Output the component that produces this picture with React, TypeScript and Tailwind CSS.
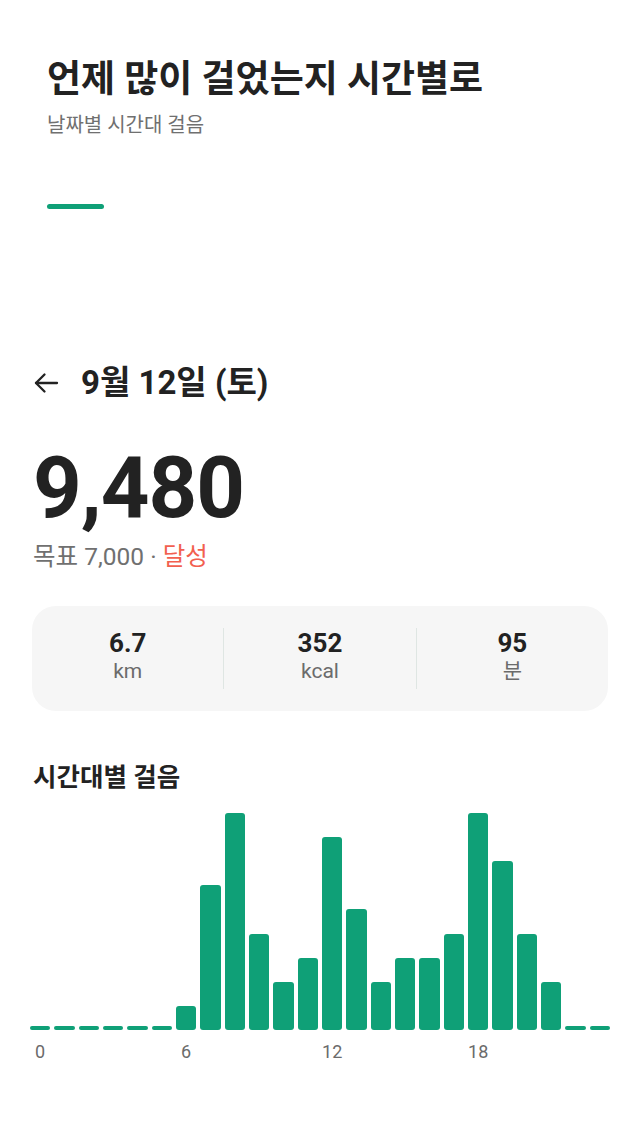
import React from "react";

const HOURS = [0, 0, 0, 0, 0, 0, 1, 6, 9, 4, 2, 3, 8, 5, 2, 3, 3, 4, 9, 7, 4, 2, 0, 0];
const UNIT = 24.1;

function BackArrow() {
  return (
    <svg width="26" height="22" viewBox="0 0 26 22" fill="none" className="shrink-0">
      <path d="M24 11H3" stroke="#222222" strokeWidth="2.3" strokeLinecap="round" />
      <path d="M11.5 2.5L3 11l8.5 8.5" stroke="#222222" strokeWidth="2.3" strokeLinecap="round" strokeLinejoin="round" />
    </svg>
  );
}

export default function App() {
  const font = { fontFamily: "Roboto, 'Noto Sans CJK KR', 'Noto Sans', sans-serif" };
  return (
    <div className="w-[640px] h-[1138px] bg-white text-[#222222] overflow-hidden" style={font}>
      <div className="px-[47px] pt-[57px]">
        <h1 className="text-[37px] leading-[46px] font-bold">언제 많이 걸었는지 시간별로</h1>
        <p className="mt-[9px] text-[20px] leading-[26px] text-[#707070]">날짜별 시간대 걸음</p>
        <div className="mt-[66px] w-[57px] h-[5px] rounded-full bg-[#0fa077]" />
      </div>

      <div className="px-[32px]">
        <div className="mt-[155px] h-[38px] flex items-center gap-[22px] pl-[1px]">
          <BackArrow />
          <span className="text-[33px] leading-[38px] font-bold">9월 12일 (토)</span>
        </div>

        <div className="mt-[42px] text-[85px] leading-[88px] font-bold tracking-[-1px] pl-[1px]">9,480</div>

        <div className="mt-[10px] text-[24.5px] leading-[30px] text-[#707070] pl-[1px]">
          목표 7,000 · <span className="text-[#f2604f]">달성</span>
        </div>

        <div className="mt-[34px] h-[105px] rounded-[24px] bg-[#f6f6f6] flex items-center">
          {[
            ["6.7", "km"],
            ["352", "kcal"],
            ["95", "분"],
          ].map(([v, u], i) => (
            <div
              key={u}
              className={`flex-1 h-[61px] flex flex-col items-center justify-center ${i > 0 ? "border-l border-[#dfe6e3]" : ""}`}
            >
              <span className="text-[26px] leading-[28px] font-bold -mt-[4px]">{v}</span>
              <span className="text-[21px] leading-[28px] text-[#6b6b6b]">{u}</span>
            </div>
          ))}
        </div>

        <h2 className="mt-[50px] text-[25.5px] leading-[32px] font-semibold pl-[1px]">시간대별 걸음</h2>
      </div>

      <div className="pl-[30px] pr-[30px]">
        <div className="mt-[20px] h-[217px] grid grid-cols-24 gap-x-[4px] items-end">
          {HOURS.map((h, i) => (
            <div
              key={i}
              className="rounded-[3px] bg-[#0fa077]"
              style={{ height: h === 0 ? 4 : Math.round(h * UNIT) }}
            />
          ))}
        </div>
        <div className="mt-[11px] grid grid-cols-24 gap-x-[4px] text-[18px] leading-[22px] text-[#6b6b6b]">
          <span className="col-start-1 text-center">0</span>
          <span className="col-start-7 text-center">6</span>
          <span className="col-start-13 text-center">12</span>
          <span className="col-start-19 text-center">18</span>
        </div>
      </div>
    </div>
  );
}
